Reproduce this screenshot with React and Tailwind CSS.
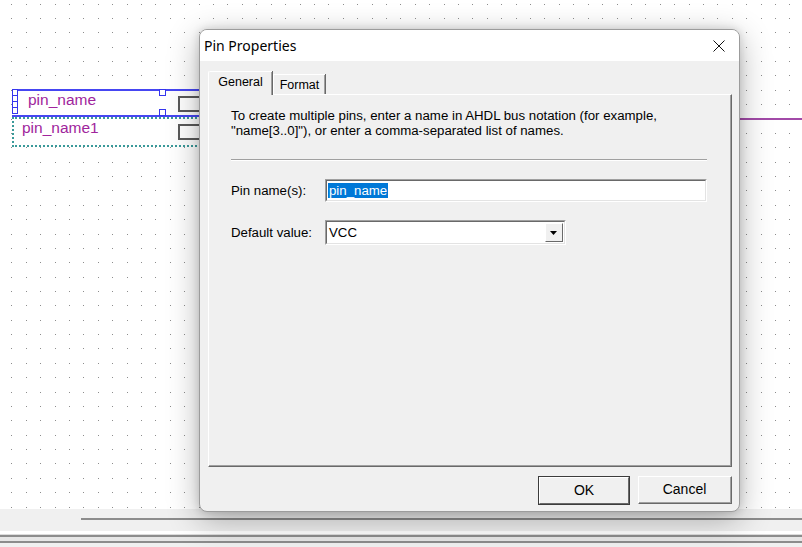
import React, { useMemo } from "react";

function Dots() {
  const rects = useMemo(() => {
    const out = [];
    for (let i = 0; i < 56; i++) {
      for (let j = 0; j < 36; j++) {
        const x = Math.round(11.3 + 14.41 * i);
        const y = Math.round(3.6 + 14.37 * j);
        out.push(<rect key={i + "-" + j} x={x} y={y} width="1" height="1" fill="#8c8c8c" />);
      }
    }
    return out;
  }, []);
  return (
    <svg className="absolute inset-0" width="802" height="509" shapeRendering="crispEdges">
      {rects}
    </svg>
  );
}

function Sunken({ className = "", children }) {
  return (
    <div className={"border border-t-[#a0a0a0] border-l-[#a0a0a0] border-r-white border-b-white " + className}>
      <div className="h-full w-full border border-t-[#696969] border-l-[#696969] border-r-[#e3e3e3] border-b-[#e3e3e3] bg-white flex items-center">
        {children}
      </div>
    </div>
  );
}

export default function App() {
  const sans = { fontFamily: '"Liberation Sans", Arial, sans-serif' };
  return (
    <div className="relative w-[802px] h-[547px] overflow-hidden bg-[#f0f0f0] flex flex-col" style={sans}>
      {/* Canvas */}
      <div className="relative h-[509px] bg-white overflow-hidden shrink-0">
        <Dots />
        {/* pin 2 */}
        <div className="absolute left-[12px] top-[117px] w-[200px] h-[30px] border-2 border-dotted border-[#3a9a9a] bg-white" />
        <div className="absolute left-[22px] top-[119px] text-[15.5px] leading-[18px] text-[#a0259c]">pin_name1</div>
        <div className="absolute left-[178px] top-[124px] w-[30px] h-[16px] border-2 border-[#5a5a5a] bg-white" />
        {/* pin 1 */}
        <div className="absolute left-[12px] top-[89px] w-[200px] h-[28px] border-y-2 border-[#4646f2] bg-white" />
        <div className="absolute left-[12px] top-[89px] flex flex-col">
          <div className="w-[6px] h-[7px] border border-[#3535ee] bg-white" />
          <div className="w-[6px] h-[7px] -mt-px border border-[#3535ee] bg-white" />
          <div className="w-[6px] h-[7px] -mt-px border border-[#3535ee] bg-white" />
          <div className="w-[6px] h-[7px] -mt-px border border-[#3535ee] bg-white" />
        </div>
        <div className="absolute left-[159px] top-[89px] w-[7px] h-[7px] border border-[#3535ee] bg-white" />
        <div className="absolute left-[159px] top-[109px] w-[7px] h-[7px] border border-[#3535ee] bg-white" />
        <div className="absolute left-[28px] top-[91px] text-[15.5px] leading-[18px] text-[#a0259c]">pin_name</div>
        <div className="absolute left-[178px] top-[96px] w-[30px] h-[16px] border-2 border-[#5a5a5a] bg-white" />
        {/* wire */}
        <div className="absolute left-[730px] top-[118px] w-[80px] h-[2px] bg-[#a24aa8]" />
      </div>

      {/* bottom bars */}
      <div className="flex flex-col">
        <div className="h-[9px]" />
        <div className="h-[2px] ml-[81px] bg-[#8c8c8c]" />
        <div className="h-[11px]" />
        <div className="h-[3px] bg-white" />
        <div className="h-px bg-[#dcdcdc]" />
        <div className="h-[2px] bg-[#8c8c8c]" />
        <div className="h-[4px] bg-[#e6e6e6]" />
        <div className="h-[2px] bg-[#8c8c8c]" />
      </div>

      {/* Dialog */}
      <div className="absolute left-[199px] top-[29px] w-[541px] h-[483px] rounded-[8px] border border-[#9c9c9c] bg-[#f0f0f0] overflow-hidden flex flex-col shadow-[0_8px_32px_rgba(0,0,0,0.3),0_0_8px_rgba(0,0,0,0.15)]">
        <div className="h-[31px] bg-white flex items-center justify-between pl-[4px] pr-[14px] shrink-0">
          <span className="text-[14px] text-black -mt-px" style={{ fontFamily: '"Noto Sans", "Open Sans", sans-serif' }}>Pin Properties</span>
          <svg width="12" height="12" viewBox="0 0 12 12">
            <path d="M0.5 0.5 L11.5 11.5 M11.5 0.5 L0.5 11.5" stroke="#111" strokeWidth="1" />
          </svg>
        </div>
        <div className="flex-1 flex flex-col pl-[8px] pr-[7px] pt-[10px]">
          {/* tabs */}
          <div className="flex items-end h-[23px] text-[12.5px] text-black">
            <div className="relative z-10 h-[24px] -mb-px w-[64px] flex items-center justify-center pb-[2px] bg-[#f0f0f0] border-t border-l border-white rounded-tl-[2px] shadow-[inset_-1px_0_0_#a0a0a0,1px_0_0_#696969]">
              General
            </div>
            <div className="h-[20px] w-[52px] ml-px flex items-center justify-center pt-[1px] border-t border-l border-white shadow-[inset_-1px_0_0_#a0a0a0,1px_0_0_#696969]">
              Format
            </div>
          </div>
          {/* panel */}
          <div className="w-[524px] h-[373px] border-t border-l border-white border-r border-b border-r-[#696969] border-b-[#696969]">
            <div className="h-full w-full border-r border-b border-r-[#a0a0a0] border-b-[#a0a0a0] pl-[22px] pt-[13px] text-[13.25px] text-black">
              <div className="leading-[15px]">
                To create multiple pins, enter a name in AHDL bus notation (for example,
                <br />
                "name[3..0]"), or enter a comma-separated list of names.
              </div>
              <div className="mt-[21px] w-[476px] h-[2px] border-t border-[#a0a0a0] border-b border-b-white" />
              <div className="mt-[18px] flex items-center">
                <div className="w-[94px]">Pin name(s):</div>
                <Sunken className="w-[382px] h-[23px]">
                  <span className="ml-[1px] bg-[#0078d7] text-white leading-[15px] px-[1px]">pin_name</span>
                </Sunken>
              </div>
              <div className="mt-[18px] flex items-center">
                <div className="w-[94px]">Default value:</div>
                <Sunken className="w-[241px] h-[25px]">
                  <span className="ml-[2px] flex-1">VCC</span>
                  <div className="w-[18px] h-[19px] mr-px bg-[#f0f0f0] border border-t-white border-l-white border-r-[#696969] border-b-[#696969] flex items-center justify-center">
                    <svg width="8" height="4" viewBox="0 0 8 4">
                      <path d="M0 0 L7 0 L3.5 4 Z" fill="#000" />
                    </svg>
                  </div>
                </Sunken>
              </div>
            </div>
          </div>
          {/* buttons */}
          <div className="mt-[9px] flex justify-end gap-[8px] text-[14px] text-black">
            <div className="w-[92px] h-[29px] border border-[#3c3c3c] flex">
              <div className="flex-1 border border-t-white border-l-white border-r-[#696969] border-b-[#696969] bg-[#f0f0f0] flex items-center justify-center">
                OK
              </div>
            </div>
            <div className="w-[94px] h-[28px] border border-t-white border-l-white border-r-[#696969] border-b-[#696969] flex">
              <div className="flex-1 border-r border-b border-r-[#a0a0a0] border-b-[#a0a0a0] bg-[#f0f0f0] flex items-center justify-center">
                Cancel
              </div>
            </div>
          </div>
        </div>
      </div>
    </div>
  );
}
